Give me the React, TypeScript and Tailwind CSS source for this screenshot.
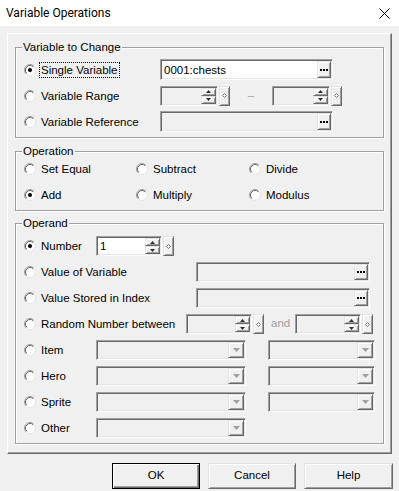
import React from "react";

// classic win32 bevels
const sunken =
  "border border-t-[#a0a0a0] border-l-[#a0a0a0] border-b-white border-r-white shadow-[inset_1px_1px_0_#696969,inset_-1px_-1px_0_#e3e3e3]";
const raised =
  "border border-t-[#e3e3e3] border-l-[#e3e3e3] border-b-[#696969] border-r-[#696969] shadow-[inset_1px_1px_0_#fff,inset_-1px_-1px_0_#a0a0a0] bg-[#f0f0f0]";

function Radio({ checked = false }: { checked?: boolean }) {
  return (
    <svg width="12" height="12" viewBox="0 0 12 12" className="flex-none">
      <circle cx="6" cy="6" r="5.5" fill="#fff" stroke="#e3e3e3" />
      <path d="M2.11 9.89 A5.5 5.5 0 0 1 9.89 2.11" fill="none" stroke="#a0a0a0" />
      <path d="M2.82 9.18 A4.5 4.5 0 0 1 9.18 2.82" fill="none" stroke="#696969" />
      {checked && <circle cx="6" cy="6" r="2" fill="#000" />}
    </svg>
  );
}

function Choice({ label, checked, focus, width }: { label: string; checked?: boolean; focus?: boolean; width: string }) {
  return (
    <div className={`flex flex-none items-center gap-[5px] ${width}`}>
      <Radio checked={checked} />
      {focus ? (
        <span className="-ml-[2px] border border-dotted border-black px-px leading-[14px]">{label}</span>
      ) : (
        <span className="leading-[14px]">{label}</span>
      )}
    </div>
  );
}

function Dots() {
  return (
    <div className={`flex h-full w-[14px] items-center justify-center ${raised}`}>
      <svg width="8" height="2" viewBox="0 0 8 2">
        <rect x="0" y="0" width="2" height="2" fill="#000" />
        <rect x="3" y="0" width="2" height="2" fill="#000" />
        <rect x="6" y="0" width="2" height="2" fill="#000" />
      </svg>
    </div>
  );
}

function TextBox({ width, value, enabled = false }: { width: string; value?: string; enabled?: boolean }) {
  return (
    <div className={`flex h-full items-center p-px ${width} ${sunken} ${enabled ? "bg-white" : "bg-[#f0f0f0]"}`}>
      <span className="flex-1 pl-[2px] leading-[14px]">{value}</span>
      <Dots />
    </div>
  );
}

function Arrow({ up }: { up?: boolean }) {
  return (
    <div className={`flex flex-1 items-center justify-center ${raised}`}>
      <svg width="5" height="3" viewBox="0 0 5 3">
        <path d={up ? "M0 3 L2.5 0 L5 3 Z" : "M0 0 L2.5 3 L5 0 Z"} fill="#303030" />
      </svg>
    </div>
  );
}

function Spin({ box, value, enabled = false }: { box: string; value?: string; enabled?: boolean }) {
  return (
    <div className="flex h-[20px] flex-none items-center gap-px">
      <div className={`flex h-full p-px ${box} ${sunken} ${enabled ? "bg-white" : "bg-[#f0f0f0]"}`}>
        <span className="flex flex-1 items-center pl-[2px] leading-[14px]">{value}</span>
        <div className="flex w-[15px] flex-col">
          <Arrow up />
          <Arrow />
        </div>
      </div>
      <div className={`flex h-full w-[11px] items-center justify-center ${raised}`}>
        <svg width="5" height="5" viewBox="0 0 5 5">
          <path d="M2.5 0.5 L4.5 2.5 L2.5 4.5 L0.5 2.5 Z" fill="none" stroke="#606060" strokeWidth="0.8" />
        </svg>
      </div>
    </div>
  );
}

function Combo({ width }: { width: string }) {
  return (
    <div className={`flex h-[20px] flex-none justify-end bg-[#f0f0f0] p-px ${width} ${sunken}`}>
      <div className={`flex h-full w-[16px] items-center justify-center ${raised}`}>
        <svg width="7" height="4" viewBox="0 0 7 4">
          <path d="M0 0 L3.5 4 L7 0 Z" fill="#a0a0a0" />
        </svg>
      </div>
    </div>
  );
}

function Group({ title, className, children }: { title: string; className: string; children: React.ReactNode }) {
  return (
    <div className={`flex flex-col border border-[#a0a0a0] pb-[5px] shadow-[inset_1px_1px_0_#fff,1px_1px_0_#fff] ${className}`}>
      <span className="-mt-[7px] ml-[6px] w-fit bg-[#f0f0f0] px-px leading-[12px]">{title}</span>
      {children}
    </div>
  );
}

export default function App() {
  return (
    <div className="h-[491px] w-[399px] overflow-hidden bg-[#f0f0f0] text-[11.5px] text-black [font-family:'Liberation_Sans',Arial,sans-serif]">
      {/* TITLE BAR */}
      <div className="flex h-[26px] items-center justify-between bg-white pl-[6px] pr-[9px]">
        <span className="text-[12px] [font-family:Roboto,sans-serif]">Variable Operations</span>
        <svg width="11" height="11" viewBox="0 0 11 11">
          <path d="M0.5 0.5 L10.5 10.5 M10.5 0.5 L0.5 10.5" stroke="#000" strokeWidth="1" />
        </svg>
      </div>

      <div className="pl-[7px] pt-[7px]">
        {/* OUTER PANEL */}
        <div className="flex w-[385px] flex-col border border-t-white border-l-white border-b-[#696969] border-r-[#696969] px-[7px] pb-[9px] pt-[13px] shadow-[inset_-1px_-1px_0_#a0a0a0]">
          <Group title="Variable to Change" className="">
            <div className="mt-[6px] flex flex-col gap-[5px] pl-[8px]">
              <div className="flex h-[21px] items-center">
                <Choice label="Single Variable" checked focus width="w-[136px]" />
                <TextBox width="w-[173px]" value="0001:chests" enabled />
              </div>
              <div className="flex h-[21px] items-center">
                <Choice label="Variable Range" width="w-[136px]" />
                <Spin box="w-[58px]" />
                <span className="w-[42px] text-center text-[#a0a0a0]">–</span>
                <Spin box="w-[58px]" />
              </div>
              <div className="flex h-[21px] items-center">
                <Choice label="Variable Reference" width="w-[136px]" />
                <TextBox width="w-[173px]" />
              </div>
            </div>
          </Group>

          <Group title="Operation" className="mt-[13px]">
            <div className="mt-[2px] flex flex-col gap-[6px] pl-[8px]">
              <div className="flex h-[20px] items-center">
                <Choice label="Set Equal" width="w-[112px]" />
                <Choice label="Subtract" width="w-[113px]" />
                <Choice label="Divide" width="w-[100px]" />
              </div>
              <div className="flex h-[20px] items-center">
                <Choice label="Add" checked width="w-[112px]" />
                <Choice label="Multiply" width="w-[113px]" />
                <Choice label="Modulus" width="w-[100px]" />
              </div>
            </div>
          </Group>

          <Group title="Operand" className="mt-[12px]">
            <div className="mt-[7px] flex flex-col gap-[6px] pl-[8px]">
              <div className="flex h-[20px] items-center">
                <Choice label="Number" checked width="w-[72px]" />
                <Spin box="w-[66px]" value="1" enabled />
              </div>
              <div className="flex h-[20px] items-center">
                <Choice label="Value of Variable" width="w-[172px]" />
                <TextBox width="w-[174px]" />
              </div>
              <div className="flex h-[20px] items-center">
                <Choice label="Value Stored in Index" width="w-[172px]" />
                <TextBox width="w-[174px]" />
              </div>
              <div className="flex h-[20px] items-center">
                <Choice label="Random Number between" width="w-[162px]" />
                <Spin box="w-[66px]" />
                <span className="w-[31px] pl-[7px] text-[#a0a0a0]">and</span>
                <Spin box="w-[66px]" />
              </div>
              {["Item", "Hero", "Sprite"].map((label) => (
                <div key={label} className="flex h-[20px] items-center gap-[22px]">
                  <div className="flex items-center">
                    <Choice label={label} width="w-[72px]" />
                    <Combo width="w-[150px]" />
                  </div>
                  <Combo width="w-[107px]" />
                </div>
              ))}
              <div className="flex h-[20px] items-center">
                <Choice label="Other" width="w-[72px]" />
                <Combo width="w-[150px]" />
              </div>
            </div>
          </Group>
        </div>

        {/* BUTTONS */}
        <div className="mt-[9px] flex w-[386px] justify-end gap-[8px]">
          <button className="h-[26px] w-[88px] border border-black bg-[#f0f0f0] shadow-[inset_1px_1px_0_#fff,inset_-1px_-1px_0_#696969,inset_-2px_-2px_0_#a0a0a0]">
            OK
          </button>
          <button className={`h-[26px] w-[88px] ${raised}`}>Cancel</button>
          <button className={`h-[26px] w-[89px] ${raised}`}>Help</button>
        </div>
      </div>
    </div>
  );
}
